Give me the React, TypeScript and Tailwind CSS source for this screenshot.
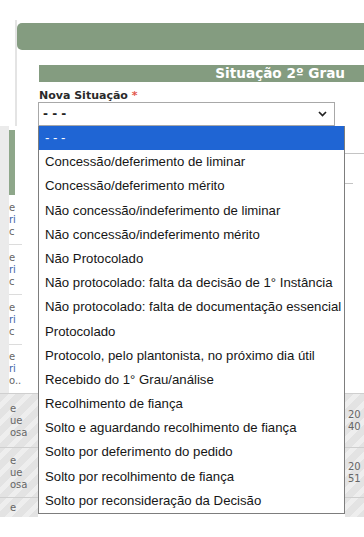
import React from 'react'

const options = [
  '- - -',
  'Concessão/deferimento de liminar',
  'Concessão/deferimento mérito',
  'Não concessão/indeferimento de liminar',
  'Não concessão/indeferimento mérito',
  'Não Protocolado',
  'Não protocolado: falta da decisão de 1° Instância',
  'Não protocolado: falta de documentação essencial',
  'Protocolado',
  'Protocolo, pelo plantonista, no próximo dia útil',
  'Recebido do 1° Grau/análise',
  'Recolhimento de fiança',
  'Solto e aguardando recolhimento de fiança',
  'Solto por deferimento do pedido',
  'Solto por recolhimento de fiança',
  'Solto por reconsideração da Decisão',
]

const hatch =
  'bg-[repeating-linear-gradient(135deg,#e3e3e3_0px,#e3e3e3_7px,#eeeeee_7px,#eeeeee_12px)]'

function LeftRow() {
  return (
    <div className="h-[50px] flex flex-col justify-center border-b border-[#dcdcdc] text-[10px] leading-[12px] font-['DejaVu_Sans',sans-serif]">
      <span className="text-[#666]">e</span>
      <span className="text-[#3b62a8]">ri</span>
      <span className="text-[#666]">c</span>
    </div>
  )
}

export default function App() {
  return (
    <div className="relative w-[364px] h-[537px] overflow-hidden bg-white">
      {/* Modal header + field */}
      <div className="h-[126px] pt-[20px] pl-[15px]">
        <div className="h-full border-l-[2px] border-[#e4e4e4] pt-[3px]">
          <div className="h-[27px] rounded-l-[5px] bg-[#849c80]" />
          <div className="pl-[22px] pt-[15px]">
            <div className="h-[17px] bg-[#849c80] pr-[19px] text-right text-[13.6px] leading-[17px] font-bold text-white font-['DejaVu_Sans',sans-serif]">
              Situação 2º Grau
            </div>
            <div className="mt-[7px] h-[13px] text-[11px] leading-[13px] font-bold text-[#2a2a2a] font-['DejaVu_Sans',sans-serif]">
              Nova Situação <span className="text-[#e2574c]">*</span>
            </div>
            <div className="-ml-[1px] flex h-[24px] w-[297px] items-center justify-between border border-[#a8a8a8] pl-[4px] pr-[7px]">
              <span className="text-[12px] font-bold text-[#222] font-['DejaVu_Sans',sans-serif]">- - -</span>
              <svg width="9" height="6" viewBox="0 0 9 6">
                <polyline points="1,1 4.5,4.5 8,1" fill="none" stroke="#222" strokeWidth="1.7" />
              </svg>
            </div>
          </div>
        </div>
      </div>

      {/* Page content behind the open list */}
      <div className="flex h-[411px]">
        <div className="flex w-[38px] flex-col">
          <div className="flex h-[267px]">
            <div className="w-[9px] bg-[#ebebeb]" />
            <div className="flex w-[13px] flex-col overflow-hidden">
              <div className="h-[4px]" />
              <div className="h-[65px] w-[6px] bg-[#8ea78a]" />
              <LeftRow />
              <LeftRow />
              <LeftRow />
              <div className="h-[48px] flex flex-col justify-center text-[10px] leading-[12px] font-['DejaVu_Sans',sans-serif]">
                <span className="text-[#666]">e</span>
                <span className="text-[#3b62a8]">ri</span>
                <span className="text-[#666]">o..</span>
              </div>
            </div>
          </div>
          <div className={`flex flex-col ${hatch}`}>
            {['h-[54px]', 'h-[50px]', 'h-[20px]'].map((h, i) => (
              <div
                key={i}
                className={`${h} flex flex-col justify-center border-t border-[#cfcfcf] pl-[10px] text-[10px] leading-[12px] text-[#666] font-['DejaVu_Sans',sans-serif]`}
              >
                <span>e</span>
                {i < 2 && <span>ue</span>}
                {i < 2 && <span>osa</span>}
              </div>
            ))}
          </div>
        </div>

        <div className="flex-1" />

        <div className="flex w-[19px] flex-col">
          <div className="h-[267px]">
            <div className="mt-[27px] h-px bg-[#c4c4c4]" />
            <div className="mt-[29px] h-px w-[8px] bg-[#c4c4c4]" />
          </div>
          <div className={`flex flex-col ${hatch}`}>
            {['h-[54px]', 'h-[50px]', 'h-[20px]'].map((h, i) => (
              <div
                key={i}
                className={`${h} flex flex-col justify-center overflow-hidden border-t border-[#cfcfcf] pl-[3px] text-[10px] leading-[12px] text-[#666] font-['DejaVu_Sans',sans-serif]`}
              >
                {i < 2 && <span>20</span>}
                {i < 2 && <span>{i === 0 ? '40' : '51'}</span>}
              </div>
            ))}
          </div>
        </div>
      </div>

      {/* Open select list */}
      <ul className="absolute left-[38px] top-[126px] w-[307px] border border-t-0 border-[#7d7d7d] bg-white font-['Liberation_Sans',Arial,sans-serif] text-[13.2px]">
        {options.map((o, i) => (
          <li
            key={o}
            className={`h-[24.2px] whitespace-nowrap pl-[6px] leading-[24.2px] ${
              i === 0 ? 'bg-[#1f65d4] text-white' : 'text-[#161616]'
            }`}
          >
            {o}
          </li>
        ))}
      </ul>
    </div>
  )
}
